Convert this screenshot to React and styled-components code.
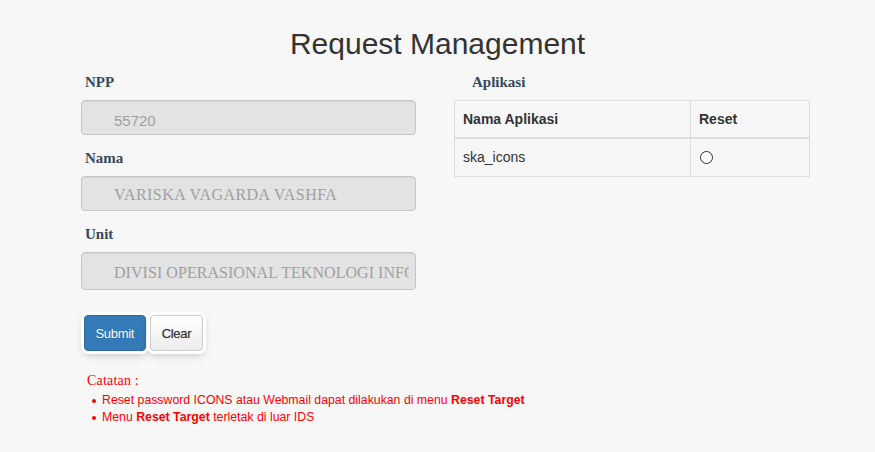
import React from "react";
import styled, { createGlobalStyle } from "styled-components";

const GlobalStyle = createGlobalStyle`
  body {
    margin: 0;
    background-color: #f7f7f7;
    font-family: "Liberation Sans", Arial, sans-serif;
    color: #333;
  }
`;

const Page = styled.div`
  width: 875px;
  padding-top: 27px;
`;

const Title = styled.h1`
  margin: 0;
  font-size: 30px;
  line-height: 33px;
  font-weight: 400;
  text-align: center;
  color: #333;
`;

const Columns = styled.div`
  display: grid;
  grid-template-columns: 335px 356px;
  column-gap: 38px;
  padding-left: 81px;
  padding-top: 12px;
  align-items: start;
`;

const Column = styled.div`
  display: flex;
  flex-direction: column;
`;

const Label = styled.div`
  font-family: "Liberation Serif", "Times New Roman", serif;
  font-weight: 700;
  font-size: 15px;
  line-height: 20px;
  color: #34495e;
  padding-left: ${(p) => p.$indent || 4}px;
  margin-bottom: 8px;
`;

const Field = styled.input`
  box-sizing: border-box;
  width: 335px;
  height: ${(p) => p.$height}px;
  margin: 0 0 13px;
  padding: ${(p) => p.$top}px 6px 0 32px;
  border: 1px solid #c6c6c6;
  border-radius: 4px;
  background-color: #e3e3e3;
  box-shadow: inset 0 1px 1px rgba(0, 0, 0, 0.06);
  color: #a0a0a0;
  font-family: ${(p) =>
    p.$serif
      ? `"Liberation Serif", "Times New Roman", serif`
      : `"Liberation Sans", Arial, sans-serif`};
  font-size: ${(p) => (p.$serif ? 16 : 15)}px;
  letter-spacing: ${(p) => p.$spacing || 0}px;
  outline: none;
`;

const ButtonRow = styled.div`
  display: flex;
  gap: 4px;
  margin-top: 12px;
  padding-left: 3px;
`;

const Button = styled.button`
  height: 36px;
  padding: 0 ${(p) => (p.$primary ? 10.5 : 11)}px;
  border-radius: 4px;
  border: 1px solid ${(p) => (p.$primary ? "#2e6da4" : "#cccccc")};
  background: ${(p) =>
    p.$primary ? "#337ab7" : "linear-gradient(#ffffff, #ececec)"};
  color: ${(p) => (p.$primary ? "#fff" : "#333")};
  font-family: "Liberation Sans", Arial, sans-serif;
  font-size: 13px;
  letter-spacing: -0.3px;
  text-shadow: ${(p) =>
    p.$primary ? "0 0 1px rgba(0,0,0,0.3)" : "0 0 1px rgba(0,0,0,0.35)"};
  box-shadow: 0 0 0 3px #fff, 0 4px 8px rgba(0, 0, 0, 0.22);
  cursor: pointer;
`;

const Table = styled.table`
  width: 356px;
  border-collapse: collapse;
  font-size: 14px;
  line-height: 20px;
  color: #333;
`;

const Th = styled.th`
  text-align: left;
  font-weight: 700;
  padding: 8px;
  border: 1px solid #dddddd;
  border-bottom-width: 2px;
  width: ${(p) => p.$width || "auto"};
`;

const Td = styled.td`
  padding: 8px 8px 9px;
  border: 1px solid #dddddd;
  vertical-align: middle;
`;

const Radio = styled.span`
  display: block;
  width: 11px;
  height: 11px;
  margin-left: 1px;
  border: 1px solid #333;
  border-radius: 50%;
  background: #fff;
`;

const Notes = styled.div`
  padding-left: 81px;
  margin-top: 21px;
  color: #ff0000;
`;

const NoteTitle = styled.div`
  font-family: "Liberation Serif", "Times New Roman", serif;
  font-size: 14px;
  line-height: 17px;
  padding-left: 6px;
  letter-spacing: 0.2px;
`;

const NoteList = styled.ul`
  list-style: none;
  margin: 3px 0 0;
  padding: 0;
  font-size: 12.3px;
  line-height: 17px;
`;

const NoteItem = styled.li`
  position: relative;
  padding-left: 21px;

  &::before {
    content: "";
    position: absolute;
    left: 11px;
    top: 7px;
    width: 4px;
    height: 4px;
    border-radius: 50%;
    background: #ff0000;
  }
`;

const fields = [
  { label: "NPP", value: "55720", height: 35, top: 5 },
  {
    label: "Nama",
    value: "VARISKA VAGARDA VASHFA",
    height: 35,
    top: 3,
    serif: true,
    spacing: 0.45,
  },
  {
    label: "Unit",
    value: "DIVISI OPERASIONAL TEKNOLOGI INFORMASI",
    height: 38,
    top: 3,
    serif: true,
    spacing: 0.05,
  },
];

export default function App() {
  return (
    <Page>
      <GlobalStyle />
      <Title>Request Management</Title>
      <Columns>
        <Column>
          {fields.map((f) => (
            <React.Fragment key={f.label}>
              <Label>{f.label}</Label>
              <Field
                readOnly
                value={f.value}
                $height={f.height}
                $top={f.top}
                $serif={f.serif}
                $spacing={f.spacing}
              />
            </React.Fragment>
          ))}
          <ButtonRow>
            <Button $primary>Submit</Button>
            <Button>Clear</Button>
          </ButtonRow>
        </Column>
        <Column>
          <Label $indent={18}>Aplikasi</Label>
          <Table>
            <thead>
              <tr>
                <Th $width="219px">Nama Aplikasi</Th>
                <Th>Reset</Th>
              </tr>
            </thead>
            <tbody>
              <tr>
                <Td>ska_icons</Td>
                <Td>
                  <Radio />
                </Td>
              </tr>
            </tbody>
          </Table>
        </Column>
      </Columns>
      <Notes>
        <NoteTitle>Catatan :</NoteTitle>
        <NoteList>
          <NoteItem>
            Reset password ICONS atau Webmail dapat dilakukan di menu <b>Reset Target</b>
          </NoteItem>
          <NoteItem>
            Menu <b>Reset Target</b> terletak di luar IDS
          </NoteItem>
        </NoteList>
      </Notes>
    </Page>
  );
}
